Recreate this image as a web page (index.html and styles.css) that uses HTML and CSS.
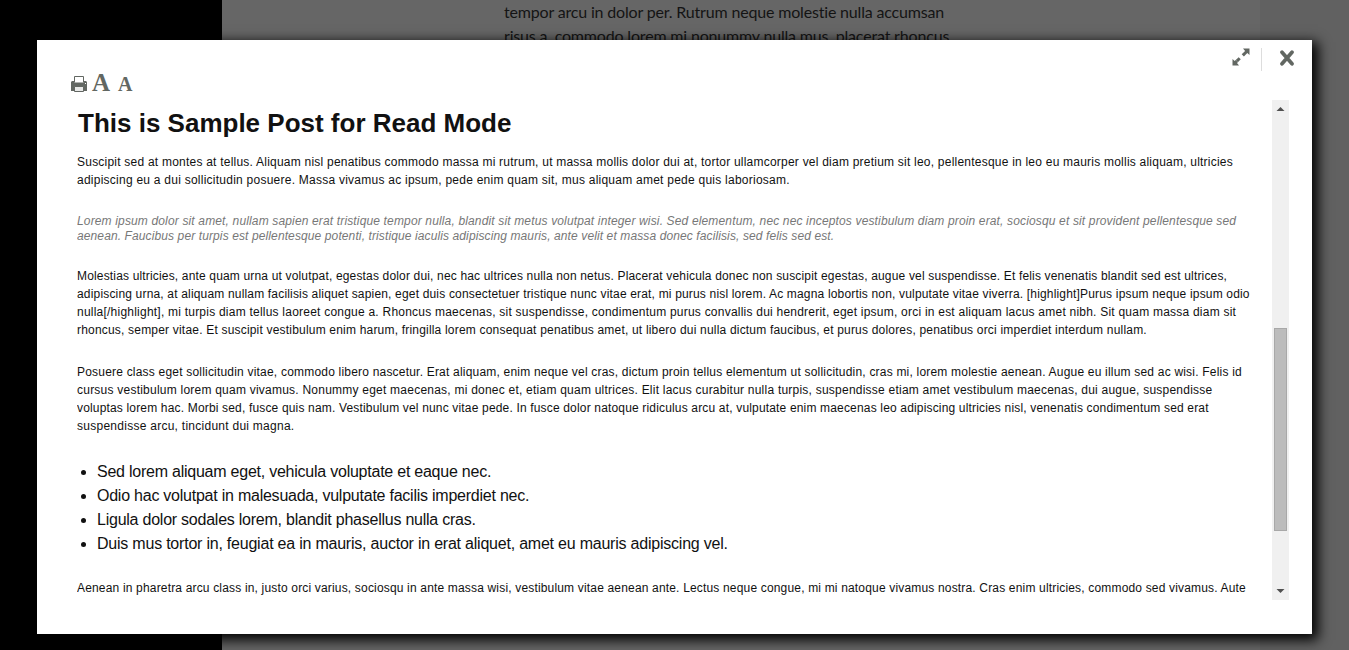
FILE: index.html
```html
<!DOCTYPE html>
<html lang="en">
<head>
<meta charset="utf-8">
<title>Read Mode</title>
<link rel="stylesheet" href="styles.css">
</head>
<body>
<div class="page">
  <main class="page-content"><p class="page-text">tempor arcu in dolor per. Rutrum neque molestie nulla accumsan<br>risus a, commodo lorem mi nonummy nulla mus, placerat rhoncus</p></main>
  <aside class="page-side"></aside>
</div>
<section class="modal">
  <div class="window-tools">
    <svg class="expand" width="18" height="18" viewBox="0 0 18 18"><path d="M11 .5h6.5V7l-2.2-2-3.4 3.5-2.2-2.2L13.1 3zM7 17.5H.5V11l2.2 2 1-1 2.2 2.2L5 15z" fill="#626762"/><path d="M4.8 13.1l2.9-2.9" stroke="#626762" stroke-width="3"/></svg>
    <span class="divider"></span>
    <svg class="close" width="14" height="16" viewBox="0 0 14 16"><path d="M2 2.2L12 13.8M12 2.2L2 13.8" stroke="#626762" stroke-width="3.7" stroke-linecap="round"/></svg>
  </div>
  <div class="reader-tools">
    <svg class="printer" width="16" height="16" viewBox="0 0 16 16"><path d="M3.5 6.5v-6h9v6" fill="#fff" stroke="#626762"/><path d="M1 5h2v1.5h10V5h2l1 1v9H0V6z" fill="#626762"/><path d="M14 7h1v1h-1z" fill="#fff"/><path d="M3.5 10.5h9v5h-9z" fill="#e8e9e8" stroke="#626762"/></svg>
    <span class="font-up">A</span><span class="font-down">A</span>
  </div>
  <div class="reader">
    <article class="post">
      <h1>This is Sample Post for Read Mode</h1>
      <p class="body first"><span class="l1">Suscipit sed at montes at tellus. Aliquam nisl penatibus commodo massa mi rutrum, ut massa mollis dolor dui at, tortor ullamcorper vel diam pretium sit leo, pellentesque in leo eu mauris mollis aliquam, ultricies</span><span class="l2">adipiscing eu a dui sollicitudin posuere. Massa vivamus ac ipsum, pede enim quam sit, mus aliquam amet pede quis laboriosam.</span></p>
      <p class="quote"><span class="l3">Lorem ipsum dolor sit amet, nullam sapien erat tristique tempor nulla, blandit sit metus volutpat integer wisi. Sed elementum, nec nec inceptos vestibulum diam proin erat, sociosqu et sit provident pellentesque sed</span><span class="l4">aenean. Faucibus per turpis est pellentesque potenti, tristique iaculis adipiscing mauris, ante velit et massa donec facilisis, sed felis sed est.</span></p>
      <p class="body third"><span class="l5">Molestias ultricies, ante quam urna ut volutpat, egestas dolor dui, nec hac ultrices nulla non netus. Placerat vehicula donec non suscipit egestas, augue vel suspendisse. Et felis venenatis blandit sed est ultrices,</span><span class="l6">adipiscing urna, at aliquam nullam facilisis aliquet sapien, eget duis consectetuer tristique nunc vitae erat, mi purus nisl lorem. Ac magna lobortis non, vulputate vitae viverra. [highlight]Purus ipsum neque ipsum odio</span><span class="l7">nulla[/highlight], mi turpis diam tellus laoreet congue a. Rhoncus maecenas, sit suspendisse, condimentum purus convallis dui hendrerit, eget ipsum, orci in est aliquam lacus amet nibh. Sit quam massa diam sit</span><span class="l8">rhoncus, semper vitae. Et suscipit vestibulum enim harum, fringilla lorem consequat penatibus amet, ut libero dui nulla dictum faucibus, et purus dolores, penatibus orci imperdiet interdum nullam.</span></p>
      <p class="body fourth"><span class="l9">Posuere class eget sollicitudin vitae, commodo libero nascetur. Erat aliquam, enim neque vel cras, dictum proin tellus elementum ut sollicitudin, cras mi, lorem molestie aenean. Augue eu illum sed ac wisi. Felis id</span><span class="l10">cursus vestibulum lorem quam vivamus. Nonummy eget maecenas, mi donec et, etiam quam ultrices. Elit lacus curabitur nulla turpis, suspendisse etiam amet vestibulum maecenas, dui augue, suspendisse</span><span class="l11">voluptas lorem hac. Morbi sed, fusce quis nam. Vestibulum vel nunc vitae pede. In fusce dolor natoque ridiculus arcu at, vulputate enim maecenas leo adipiscing ultricies nisl, venenatis condimentum sed erat</span><span class="l12">suspendisse arcu, tincidunt dui magna.</span></p>
      <ul>
        <li>Sed lorem aliquam eget, vehicula voluptate et eaque nec.</li>
        <li>Odio hac volutpat in malesuada, vulputate facilis imperdiet nec.</li>
        <li>Ligula dolor sodales lorem, blandit phasellus nulla cras.</li>
        <li class="long">Duis mus tortor in, feugiat ea in mauris, auctor in erat aliquet, amet eu mauris adipiscing vel.</li>
      </ul>
      <p class="body last"><span class="l13">Aenean in pharetra arcu class in, justo orci varius, sociosqu in ante massa wisi, vestibulum vitae aenean ante. Lectus neque congue, mi mi natoque vivamus nostra. Cras enim ultricies, commodo sed vivamus. Aute</span></p>
    </article>
    <div class="scrollbar">
      <svg width="17" height="17" viewBox="0 0 17 17"><path d="M4.5 11h8L8.5 7z" fill="#505050"/></svg>
      <div class="track"><div class="thumb"></div></div>
      <svg width="17" height="17" viewBox="0 0 17 17"><path d="M4.5 6h8l-4 4z" fill="#505050"/></svg>
    </div>
  </div>
</section>
</body>
</html>
```
FILE: styles.css
```css
* { box-sizing: border-box; }
body { margin: 0; width: 1349px; height: 650px; overflow: hidden; position: relative; background: #000; font-family: "Liberation Sans", Arial, sans-serif; color: #111; }
.page { display: flex; height: 650px; padding-left: 222px; }
.page-content { width: 1038px; padding-left: 282px; background: #666; }
.page-side { flex: 1; background: #616161; }
.page-text { margin: 0; font: 16px/24px Lato, sans-serif; letter-spacing: -.175px; white-space: nowrap; color: #141414; }
.modal { position: absolute; left: 37px; top: 40px; width: 1275px; height: 594px; background: #fff; box-shadow: 4px 4px 12px 2px #000; }
.window-tools { display: flex; justify-content: flex-end; height: 32px; padding: 8px 18px 0 0; }
.expand { margin-right: 11px; }
.divider { width: 1px; height: 23px; background: #ddd; }
.close { margin: 2px 0 0 18px; }
.reader-tools { display: flex; align-items: flex-end; height: 28px; padding: 0 0 8px 34px; font-family: "Liberation Serif", serif; font-weight: bold; color: #626762; }
.font-up { font-size: 25px; line-height: 14px; margin: 0 0 2px 5px; }
.font-down { font-size: 20px; line-height: 12px; margin: 0 0 2px 8px; }
.reader { display: flex; height: 500px; padding-left: 40px; }
.post { width: 1195px; overflow: hidden; }
.post h1 { margin: 8px 0 15px 1px; font-size: 26px; line-height: 30px; }
.post p { margin: 0; font-size: 12px; white-space: nowrap; }
.post p span { display: block; width: max-content; }
.post .body { line-height: 18px; }
.post .quote { margin: 25px 0 23px; line-height: 15px; font-style: italic; color: #777; }
.post .fourth { margin-top: 24px; }
.post ul { margin: 25px 0 23px; padding-left: 20px; font-size: 16px; line-height: 24px; letter-spacing: -.237px; }
.long { letter-spacing: -.22px; }
.l1 { letter-spacing: .224px; }
.l2 { letter-spacing: .246px; }
.l3 { letter-spacing: .149px; }
.l4 { letter-spacing: .111px; }
.l5 { letter-spacing: .165px; }
.l6 { letter-spacing: .174px; }
.l7 { letter-spacing: .226px; }
.l8 { letter-spacing: .194px; }
.l9 { letter-spacing: .201px; }
.l10 { letter-spacing: .229px; }
.l11 { letter-spacing: .167px; }
.l12 { letter-spacing: .263px; }
.l13 { letter-spacing: .171px; }
.scrollbar { display: flex; flex-direction: column; width: 17px; background: #f0f0f0; }
.track { flex: 1; padding: 211px 2px 0; }
.thumb { height: 203px; background: #bcbcbc; border: 1px solid #a8a8a8; }
```
